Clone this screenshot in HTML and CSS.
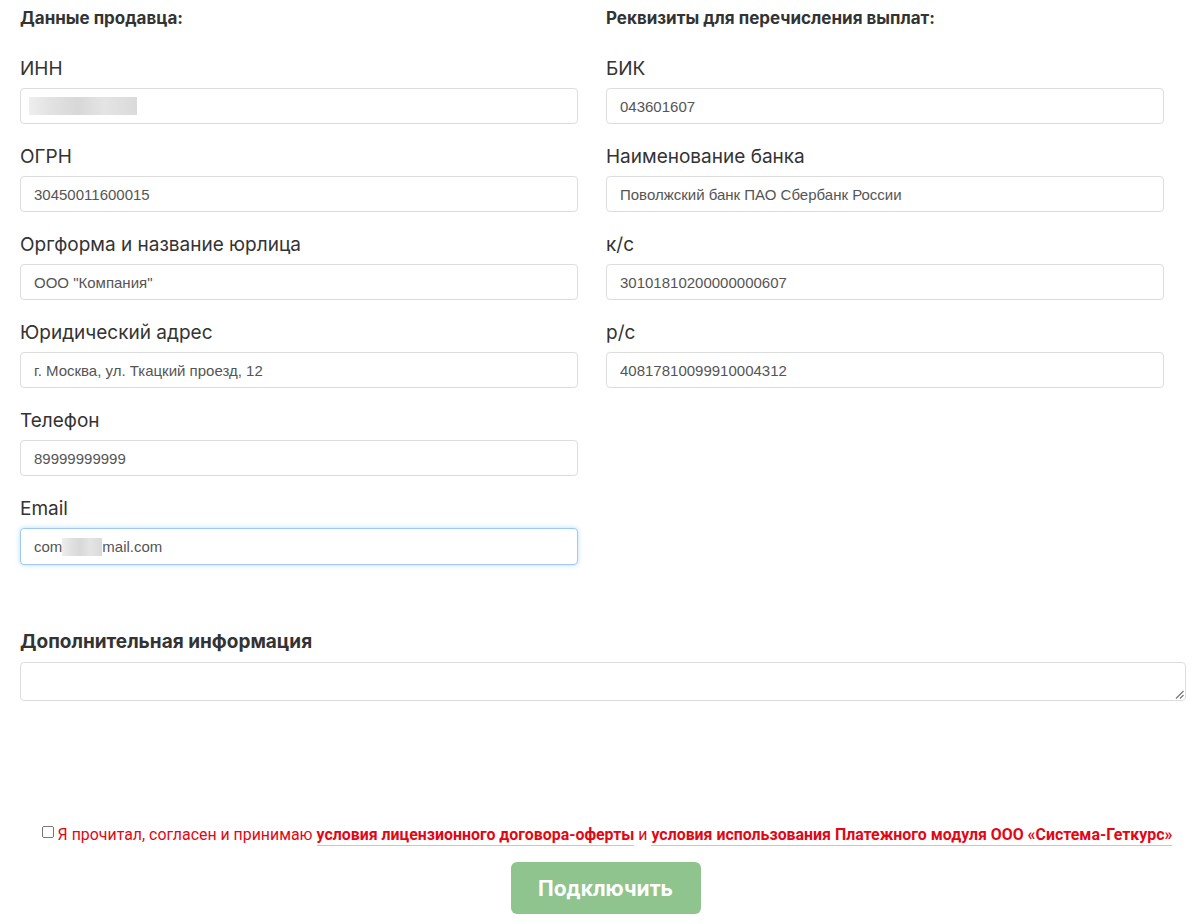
FILE: index.html
```html
<!DOCTYPE html>
<html lang="ru">
<head>
<meta charset="utf-8">
<link rel="stylesheet" href="styles.css">
</head>
<body>
<div class="page">
  <div class="cols">
    <div class="col">
      <h3 class="col-title">Данные продавца:</h3>
      <div class="field"><label class="lbl">ИНН</label><div class="inp"><span class="blur blur-inn"></span></div></div>
      <div class="field"><label class="lbl">ОГРН</label><div class="inp">30450011600015</div></div>
      <div class="field"><label class="lbl">Оргформа и название юрлица</label><div class="inp">ООО "Компания"</div></div>
      <div class="field"><label class="lbl">Юридический адрес</label><div class="inp">г. Москва, ул. Ткацкий проезд, 12</div></div>
      <div class="field"><label class="lbl">Телефон</label><div class="inp">89999999999</div></div>
      <div class="field"><label class="lbl">Email</label><div class="inp focus">com<span class="blur blur-mail"></span>mail.com</div></div>
    </div>
    <div class="col">
      <h3 class="col-title">Реквизиты для перечисления выплат:</h3>
      <div class="field"><label class="lbl">БИК</label><div class="inp">043601607</div></div>
      <div class="field"><label class="lbl">Наименование банка</label><div class="inp">Поволжский банк ПАО Сбербанк России</div></div>
      <div class="field"><label class="lbl">к/с</label><div class="inp">30101810200000000607</div></div>
      <div class="field"><label class="lbl">р/с</label><div class="inp">40817810099910004312</div></div>
    </div>
  </div>

  <div class="extra">
    <div class="extra-title">Дополнительная информация</div>
    <div class="textarea">
      <svg class="grip" width="9" height="9" viewBox="0 0 9 9"><path d="M8.5 1 L1 8.5 M8.5 5 L5 8.5" stroke="#777" stroke-width="1.2" fill="none"/></svg>
    </div>
  </div>

  <div class="agree">
    <span class="cb"></span><span class="agree-text">Я прочитал, согласен и принимаю <a class="lnk">условия лицензионного договора-оферты</a> и <a class="lnk">условия использования Платежного модуля ООО «Система-Геткурс»</a></span>
  </div>
  <div class="btn-row"><button class="btn">Подключить</button></div>
</div>
</body>
</html>
```

FILE: styles.css
```css
html, body { margin: 0; padding: 0; background: #fff; }
body { font-family: Inter, "Noto Sans", sans-serif; color: #333; }
.page { padding: 0 14px 0 20px; width: 1166px; }
.cols { display: grid; grid-template-columns: 558px 558px; column-gap: 28px; }
.col-title { margin: 8px 0 28px; font-size: 17px; line-height: 20px; font-weight: 700; color: #333; }
.field { margin-bottom: 20px; }
.lbl { display: block; font-size: 19px; line-height: 25px; margin: 0 0 7px; color: #333; font-weight: 400; }
.inp {
  box-sizing: border-box; height: 36px; border: 1px solid #ddd; border-radius: 4px;
  padding: 0 13px; display: flex; align-items: center;
  font-family: "Liberation Sans", Arial, sans-serif; font-size: 15px; color: #555; background: #fff;
}
.inp.focus { height: 37px; margin-bottom: -1px; border-color: #9cc9f5; box-shadow: 0 0 5px rgba(102,175,233,.45); }
.blur { display: inline-block; height: 18px; background: linear-gradient(90deg, #eee 0, #e2e2e2 20%, #d8d8d8 45%, #e4e4e4 70%, #dadada 100%); }
.blur-inn { width: 108px; margin-left: -5px; }
.blur-mail { width: 40px; }
.extra { margin-top: 46px; }
.extra-title { font-size: 19px; line-height: 24px; font-weight: 700; color: #333; margin-bottom: 8px; }
.textarea { position: relative; box-sizing: border-box; height: 39px; border: 1px solid #ddd; border-radius: 4px; }
.grip { position: absolute; right: 1px; bottom: 1px; }
.agree { margin-top: 123px; text-align: center; font-family: Roboto, "Liberation Sans", sans-serif; font-size: 15.9px; line-height: 22px; color: #e30613; padding-left: 8px; }
.cb { display: inline-block; width: 10px; height: 10px; border: 1px solid #777; border-radius: 2px; margin-right: 4px; vertical-align: 2px; }
.lnk { font-weight: 700; color: #e30613; text-decoration: none; border-bottom: 1px solid #f5b5b5; padding-bottom: 1px; }
.btn-row { display: flex; justify-content: center; margin-top: 16px; padding-left: 5px; }
.btn {
  width: 190px; height: 52px; border: none; border-radius: 6px; background: #8fc48e; color: #fff;
  font-family: Inter, sans-serif; font-size: 21px; font-weight: 700;
}
```
